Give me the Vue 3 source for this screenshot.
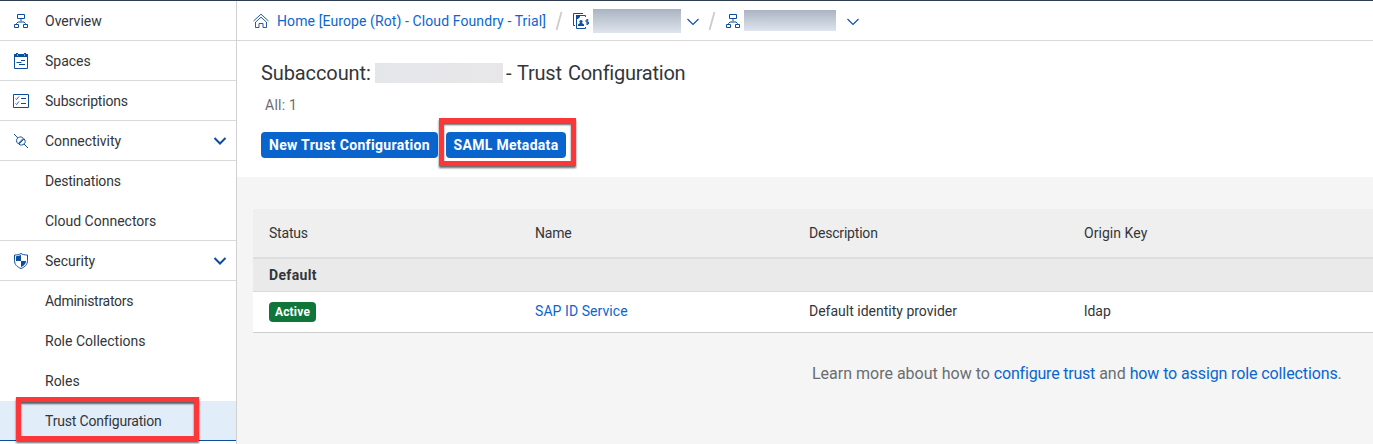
<script setup>
const nav = [
  { label: 'Overview', icon: 'org', line: true, cls: 't-overview' },
  { label: 'Spaces', icon: 'note', line: true, cls: 't-spaces' },
  { label: 'Subscriptions', icon: 'list', line: true, cls: 't-subs' },
  { label: 'Connectivity', icon: 'plug', line: true, open: true, cls: 't-conn' },
  { label: 'Destinations', cls: 't-dest' },
  { label: 'Cloud Connectors', line: true, cls: 't-cloud' },
  { label: 'Security', icon: 'shield', line: true, open: true, cls: 't-sec' },
  { label: 'Administrators', cls: 't-admin' },
  { label: 'Role Collections', cls: 't-rolec' },
  { label: 'Roles', cls: 't-roles' },
  { label: 'Trust Configuration', selected: true, cls: 't-trust' }
]
</script>

<template>
  <div class="page">
    <div class="layout">
      <nav class="side">
        <div v-for="n in nav" :key="n.label" class="item" :class="{ line: n.line, selected: n.selected }">
          <span class="icon">
            <svg v-if="n.icon === 'org'" width="16" height="16" viewBox="0 0 16 16">
              <path d="M4.500 1.500h7v4h-7zM1.500 11.500h4v3h-4zM10.500 11.500h4v3h-4zM8 5.500v3M3.500 11.500v-1l1.500-1.500h6l1.500 1.500v1" />
            </svg>
            <svg v-else-if="n.icon === 'note'" width="16" height="16" viewBox="0 0 16 16">
              <path d="M1.500 1.500h13v14h-13z" />
              <path class="fill" d="M1 1h2V0h2v1h6V0h2v1h2v3H1z" />
              <path class="hole" d="M4 1.500h1v1H4zM11 1.500h1v1h-1z" />
              <path d="M8 7.500h4M3.500 9.500h5M6 11.500h6" />
            </svg>
            <svg v-else-if="n.icon === 'list'" width="16" height="16" viewBox="0 0 16 16">
              <path d="M.5 1.500h15v13H.5z" />
              <path class="thin" d="M2.500 5.500l1 1 2.500-3M2.500 10.500l1 1 2.500-3" />
              <path d="M8 5.500h5M8 10.500h5" />
            </svg>
            <svg v-else-if="n.icon === 'plug'" width="16" height="16" viewBox="0 0 16 16">
              <path d="M1 1l3.800 3.900M11 11l4 4M5.200 10.800C3 9 3.200 6.500 4.500 5.200S8.500 3.200 10.300 5.200zM6 11.200C7.500 12.600 9.800 12.200 11.200 10.800S12.500 7.200 11 5.800z" />
            </svg>
            <svg v-else-if="n.icon === 'shield'" width="16" height="16" viewBox="0 0 16 16">
              <path d="M1.500 2c3 0 5-.5 6.500-1.500C9.500 1.500 11.500 2 14.500 2v5.500c0 4-2.500 6.500-6.500 8-4-1.500-6.500-4-6.500-8z" />
              <path class="fill" d="M3 3.200c2-.1 3.700-.5 5-1.200v6H3zM8 8h5c0 2.700-2 4.700-5 6z" />
            </svg>
          </span>
          <span class="label" :class="n.cls">{{ n.label }}</span>
          <svg v-if="n.open" class="arrow" width="14" height="10" viewBox="0 0 14 10"><path d="M1.500 2l5.500 5.500L12.500 2" /></svg>
          <span v-if="n.selected" class="mark mark-nav"></span>
        </div>
      </nav>

      <main class="main">
        <header class="crumbs">
          <svg class="home" width="16" height="16" viewBox="0 0 16 16">
            <path class="thin" d="M.5 8L8 1.200 15.500 8M2.500 9.200L8 4.200l5.500 5M2.500 9v5.500h3.500v-4h4v4h3.500V9" />
          </svg>
          <a class="t-home">Home [Europe (Rot) - Cloud Foundry - Trial]</a>
          <svg class="slash" width="8" height="20" viewBox="0 0 8 20"><path d="M1.500 19L6.500 1" /></svg>
          <svg class="acct" width="16" height="16" viewBox="0 0 16 16">
            <path d="M2 12.500H.5V.5H10M12.500 4V2.500H6L3.500 5v10.500h9V14" />
            <path class="fill" d="M3 2h4v2L5 6H3zM5 13v-1.500L7 10h2l2 1.500V13z" />
            <circle class="fill" cx="8" cy="8.500" r="1.600" />
            <path class="thin" d="M15.500 7h-2.500v2h2.500v2H13M14.300 6v6" />
          </svg>
          <span class="redact r1"></span>
          <svg class="chev c1" width="14" height="8" viewBox="0 0 14 8"><path d="M1.500 1l5.500 5.500L12.500 1" /></svg>
          <svg class="slash s2" width="8" height="20" viewBox="0 0 8 20"><path d="M1.500 19L6.500 1" /></svg>
          <svg class="org" width="16" height="16" viewBox="0 0 16 16">
            <path d="M4.500 1.500h7v4h-7zM1.500 11.500h4v3h-4zM10.500 11.500h4v3h-4zM8 5.500v3M3.500 11.500v-1l1.500-1.500h6l1.500 1.500v1" />
          </svg>
          <span class="redact r2"></span>
          <svg class="chev c2" width="14" height="8" viewBox="0 0 14 8"><path d="M1.500 1l5.500 5.500L12.500 1" /></svg>
        </header>

        <section class="head">
          <h1><span class="t-sub">Subaccount:</span><span class="redact r3"></span><span class="t-title">- Trust Configuration</span></h1>
          <p class="count"><span class="t-all">All: 1</span></p>
          <div class="buttons">
            <button><span class="t-new">New Trust Configuration</span></button>
            <button class="saml"><span class="t-saml">SAML Metadata</span><span class="mark mark-saml"></span></button>
          </div>
        </section>

        <section class="table">
          <div class="row thead">
            <span class="t-status">Status</span><span class="t-name">Name</span><span class="t-desc">Description</span><span class="t-origin">Origin Key</span>
          </div>
          <div class="group"><span class="t-default">Default</span></div>
          <div class="row body">
            <span><b class="badge"><span class="t-active">Active</span></b></span>
            <a class="t-sap">SAP ID Service</a>
            <span class="t-dip">Default identity provider</span>
            <span class="t-ldap">ldap</span>
          </div>
        </section>
        <p class="learn">Learn more about how to <a class="t-link1">configure trust</a> and <a class="t-link2">how to assign role collections</a>.</p>
      </main>
    </div>
  </div>
</template>

<style>
html, body { margin: 0; overflow: hidden; background: #f5f5f5; }
</style>

<style scoped>
* { box-sizing: border-box; }
.page {
  width: 1373px; height: 444px; overflow: hidden;
  border-top: 1px solid #2f3c50; background: #f5f5f5;
  font: 14px/20px Roboto, "Noto Sans", sans-serif; color: #32363a;
}
.layout { display: flex; height: 443px; }
.side { width: 237px; flex: none; background: #fff; border-right: 1px solid #d1d1d1; }
.item { position: relative; height: 40px; display: flex; align-items: center; padding-left: 13px; border-bottom: 1px solid transparent; }
.item.line { border-bottom-color: #d9d9d9; }
.item.selected { background: #e1edf9; border-bottom-color: #0d4d9e; }
.icon { width: 32px; height: 16px; flex: none; margin-top: 1px; }
.label { flex: none; white-space: nowrap; margin-top: 1px; }
.arrow { margin-left: auto; margin-right: 9px; }
svg { display: block; flex: none; fill: none; stroke: #0d4d9e; stroke-width: 1; }
svg .fill { fill: #0d4d9e; stroke: none; }
svg .hole { fill: #fff; stroke: none; }
svg .thin { stroke-width: .9; }
.arrow path { stroke-width: 2; }
.mark { position: absolute; border: 5px solid #fc373a; pointer-events: none; box-shadow: 0 2px 2px rgba(0,0,0,.6), inset 0 2px 2px rgba(0,0,0,.6); z-index: 2; }
.mark-nav { left: 16px; top: -4px; width: 183px; height: 44px; }
.mark-saml { left: -7px; top: -14px; width: 137px; height: 48px; }

.t-subs { letter-spacing: -.2px; }
.t-conn { letter-spacing: -.06px; }
.t-dest { letter-spacing: -.2px; }
.t-admin { letter-spacing: -.28px; }
.t-trust { letter-spacing: -.18px; }

.main { flex: 1; min-width: 0; }
.crumbs { height: 40px; display: flex; align-items: center; padding-left: 16px; background: #fff; border-bottom: 1px solid #d9d9d9; white-space: nowrap; }
a { color: #0a66d1; }
.t-home { width: 271px; margin-left: 8px; margin-top: 1px; letter-spacing: .1px; }
.home { margin-top: 1px; }
.slash { margin-left: 7px; }
.slash path { stroke: #ccc; stroke-width: 1.800; }
.acct { margin-left: 10px; margin-top: 1px; }
.redact { display: inline-block; flex: none; background: linear-gradient(#aab4c1, #dfe4ed); }
.r1 { width: 88px; height: 24px; margin-left: 4px; margin-top: 1px; }
.c1 { margin-left: 5px; margin-top: 3px; }
.s2 { margin-left: 8px; }
.org { margin-left: 9px; margin-top: 1px; }
.r2 { width: 92px; height: 21px; margin-left: 3px; }
.c2 { margin-left: 10px; margin-top: 3px; }
.chev path { stroke-width: 1.100; }

.head { height: 136px; background: #fff; padding: 20px 0 0 24px; }
h1 { margin: 0; height: 24px; font-size: 20px; font-weight: 400; line-height: 24px; display: flex; align-items: center; white-space: nowrap; }
.t-sub { width: 114px; letter-spacing: -.1px; }
.r3 { width: 128px; height: 20px; background: linear-gradient(100deg, #e4e7ea, #e8e6e8); }
.t-title { margin-left: 3px; letter-spacing: -.25px; word-spacing: 1.500px; }
.count { margin: 10px 0 0 4px; color: #6a6d70; }
.t-all { letter-spacing: .25px; }
.buttons { display: flex; gap: 8px; margin-top: 17px; }
button { position: relative; height: 26px; width: 177px; padding: 0; border: 0; border-radius: 4px; background: #0a64ce; color: #fff; font: 700 14px/26px Roboto, sans-serif; white-space: nowrap; letter-spacing: .33px; }
.saml { width: 120px; letter-spacing: .3px; }

.table { margin: 32px 0 0 16px; }
.row { display: grid; grid-template-columns: 266px 274px 275px 1fr; padding-left: 16px; align-items: center; }
.thead { height: 50px; background: #efefef; border-bottom: 2px solid #dedede; }
.t-status, .t-name, .t-desc { letter-spacing: -.2px; }
.group { height: 33px; background: #eaeaea; border-bottom: 1px solid #d9d9d9; padding-left: 16px; font-weight: 700; line-height: 32px; }
.t-default { letter-spacing: .35px; }
.body { height: 41px; background: #fff; border-bottom: 1px solid #ccc; }
.t-sap, .t-dip, .t-ldap { padding-bottom: 2px; }
.t-sap { letter-spacing: .07px; }
.t-origin { letter-spacing: .05px; }
.badge { display: flex; justify-content: center; width: 47px; height: 20px; border-radius: 4px; background: #107538; color: #fff; font-size: 12px; line-height: 20px; letter-spacing: .2px; }
.learn { margin: 31px 0 0 575px; font-size: 16px; color: #6a6d70; white-space: nowrap; }
.t-link1 { letter-spacing: -.2px; }
.t-link2 { letter-spacing: -.11px; }
</style>
